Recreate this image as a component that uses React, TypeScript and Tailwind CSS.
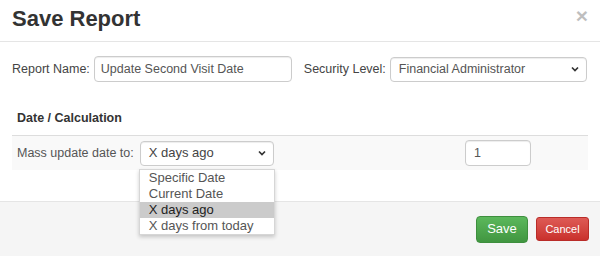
import { useState } from 'react';

const options = ['Specific Date', 'Current Date', 'X days ago', 'X days from today'];

function Chevron() {
  return (
    <svg width="8" height="6" viewBox="0 0 8 6" className="shrink-0">
      <path d="M1 1.5l3 3 3-3" fill="none" stroke="#333" strokeWidth="1.7" />
    </svg>
  );
}

function App() {
  const [selected] = useState('X days ago');

  return (
    <div className="w-[600px] h-[256px] overflow-hidden bg-white flex flex-col font-['Liberation_Sans',Arial,sans-serif] text-[12.5px] text-[#555]">
      {/* header */}
      <div className="h-[42px] shrink-0 border-b border-[#e5e5e5] flex items-center justify-between pl-3 pr-[12px]">
        <h1 className="text-[22px] font-bold text-[#333] leading-none mt-[-3px]">Save Report</h1>
        <span className="text-[21px] font-bold leading-none text-black opacity-25 mt-[-10px]">×</span>
      </div>

      {/* body */}
      <div className="flex-1 flex flex-col">
        <div className="flex items-center h-[26px] mt-[14px] px-3 whitespace-nowrap">
          <span className="shrink-0 text-[#444]">Report Name:</span>
          <input
            readOnly
            value="Update Second Visit Date"
            className="shrink-0 ml-[4px] w-[198px] h-[26px] rounded-[4px] border border-[#ccc] px-[6px] text-[#555] shadow-[inset_0_1px_1px_rgba(0,0,0,0.075)] outline-none"
          />
          <span className="shrink-0 ml-[12px] text-[#444]">Security Level:</span>
          <div className="shrink-0 ml-[4px] w-[197px] h-[25px] rounded-[4px] border border-[#ccc] bg-white flex items-center justify-between pl-[8px] pr-[7px] text-[#555] shadow-[inset_0_1px_1px_rgba(0,0,0,0.075)]">
            <span>Financial Administrator</span>
            <Chevron />
          </div>
        </div>

        <div className="h-[53px] flex items-end px-[17px] pb-[7px]">
          <span className="font-bold text-[#333]">Date / Calculation</span>
        </div>

        <div className="mx-3 h-[35px] border-t border-[#ddd] bg-[#f9f9f9] flex items-center pl-[5px] pr-[57px] whitespace-nowrap">
          <span className="text-[#555]">Mass update date to:</span>
          <div className="relative ml-[6px]">
            <div className="w-[134px] h-[25px] rounded-[4px] border border-[#ccc] bg-white flex items-center justify-between pl-[8px] pr-[7px] text-[#444] text-[13px] shadow-[inset_0_1px_1px_rgba(0,0,0,0.075)]">
              <span>{selected}</span>
              <Chevron />
            </div>
            {/* open dropdown list */}
            <ul className="absolute left-[-1px] top-[28px] w-[136px] bg-white border border-[#d6d6d6] shadow-[0_2px_4px_rgba(0,0,0,0.2)] z-10">
              {options.map(o => (
                <li
                  key={o}
                  className={`h-[16px] leading-[16px] pl-[9px] text-[13px] ${o === selected ? 'bg-[#cbcbcb] text-[#222]' : 'text-[#555]'}`}
                >
                  {o}
                </li>
              ))}
            </ul>
          </div>
          <div className="flex-1" />
          <input
            readOnly
            value="1"
            className="w-[66px] h-[26px] rounded-[4px] border border-[#ccc] bg-white px-[8px] text-[#555] shadow-[inset_0_1px_1px_rgba(0,0,0,0.075)] outline-none"
          />
        </div>
      </div>

      {/* footer */}
      <div className="h-[55px] shrink-0 border-t border-[#e5e5e5] bg-[#f5f5f5] flex items-center justify-end gap-[8px] pr-[11px]">
        <button className="w-[52px] h-[27px] rounded-[4px] border border-[#3e8f3e] bg-gradient-to-b from-[#5cb85c] to-[#419641] text-white text-[13px]">
          Save
        </button>
        <button className="w-[53px] h-[24px] rounded-[3px] border border-[#b92c28] bg-gradient-to-b from-[#de5a55] to-[#c9302c] text-white text-[11px]">
          Cancel
        </button>
      </div>
    </div>
  );
}

export default App;
